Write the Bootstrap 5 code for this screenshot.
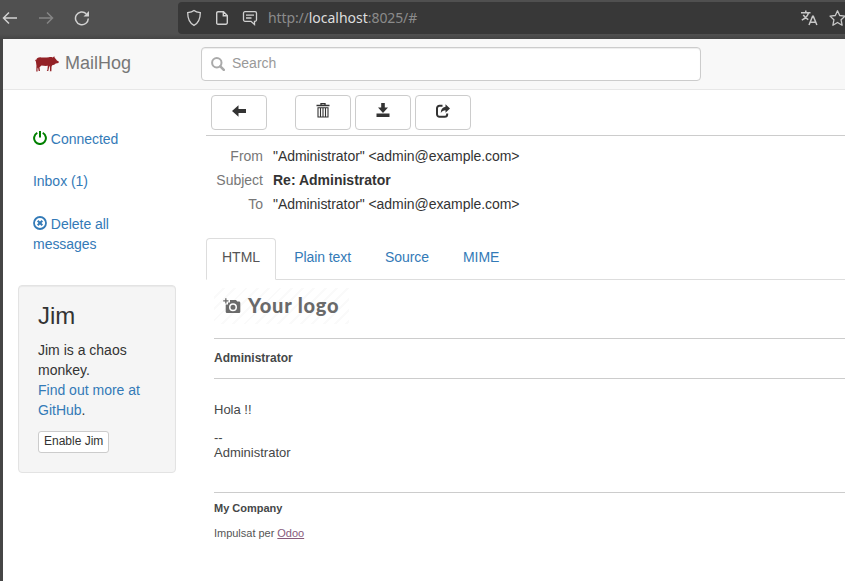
<!DOCTYPE html>
<html lang="en">
<head>
<meta charset="utf-8">
<title>MailHog</title>
<link href="https://cdn.jsdelivr.net/npm/bootstrap@5.3.0/dist/css/bootstrap.min.css" rel="stylesheet">
<style>
body{font-family:"Liberation Sans",Arial,sans-serif;font-size:14px;line-height:20px;color:#333;background:#fff;width:845px;height:581px;overflow:hidden}
a{color:#337ab7;text-decoration:none}
svg{display:block;flex:none}
.browser{height:39px;background:linear-gradient(#505050 0,#505050 34px,#454545 39px);color:#c8c8c8;padding:2px 0 5px 2px}
.browser-nav{width:176px;gap:20px}
.address{background:#383838;border-radius:4px 0 0 4px;height:32px;padding-left:8px}
.icon-gap{margin-left:13px}
.icon-star{margin-left:11px;margin-right:-1px}
.url{font-family:"Noto Sans",sans-serif;font-size:14px;color:#8b8b8b;margin-left:10px;letter-spacing:-.12px}
.url b{font-weight:400;color:#dedede;letter-spacing:0}
.page-frame{height:542px;border-left:3px solid #464646}
.topbar{height:51px;background:#f8f8f8;border-bottom:1px solid #e7e7e7;padding:0 0 1px 32px}
.brand{width:166px;font-size:18px;color:#777;gap:6px}
.brand span,.search span{margin-top:-2px}
.search{width:500px;height:34px;border:1px solid #ccc;border-radius:4px;background:#fff;box-shadow:inset 0 1px 1px rgba(0,0,0,.075);padding-left:9px;gap:7px;color:#999}
.side{width:158px;margin-left:15px;padding-top:29px}
.side .nav{gap:2px}
.side .nav-link{padding:10px 15px;color:#337ab7;letter-spacing:-.03px}
.side .nav-link:last-child{padding-top:11px;padding-bottom:9px}
.side .nav-link svg{display:inline-block;vertical-align:-1px}
.well{margin-top:22px;height:188px;background:#f5f5f5;border:1px solid #e3e3e3;border-radius:4px;padding:17px 19px 19px;box-shadow:inset 0 1px 1px rgba(0,0,0,.05)}
.well h3{font-size:24px;line-height:26px;margin:0 0 11px;font-weight:400}
.well p{margin-bottom:11px}
.btn-plain{--bs-btn-color:#333;--bs-btn-bg:#fff;--bs-btn-border-color:#ccc;border-radius:4px;width:56px;height:35px;padding:0 0 4px}
.btn-jim{width:auto;height:22px;font-size:12px;line-height:18px;padding:0 5px 2px;border-radius:3px;display:block}
.pane{margin-left:30px;min-width:0}
.tools{height:46px;padding:5px 0 0 5px;border-bottom:1px solid #ccc;gap:4px}
.tools .btn:first-child{margin-right:24px}
.heads{padding:8px 0 0;height:102px}
.heads dt{width:57px;text-align:right;font-weight:400;color:#777;margin-right:10px}
.heads>div{height:24px;padding-top:2px}
.heads dd{margin:0;letter-spacing:-.05px}
.heads dd.fw-bold{letter-spacing:0}
.nav-tabs{--bs-nav-tabs-border-color:#ddd;gap:2px;height:42px;flex-wrap:nowrap}
.nav-tabs .nav-link{padding:8px 15px 12px;height:42px;color:#337ab7;border-radius:4px 4px 0 0;letter-spacing:-.07px}
.nav-tabs .nav-link.active{color:#555;border-color:#ddd #ddd #fff;letter-spacing:0}
.mail{padding:8px 0 0 8px;color:#454748;font-size:13px;line-height:15px}
.company-logo{width:135px;height:36px;padding-left:9px;font-family:Lato,sans-serif;font-weight:900;font-size:20px;color:#6a6a6a;gap:7px;letter-spacing:.8px;background:repeating-linear-gradient(135deg,#fff 0,#fff 6px,#fafafa 6px,#fafafa 8px)}
.company-logo span{margin-top:-2px}
.mail-row{border-top:1px solid #ccc}
.mail-title{margin-top:14px;height:40px;font-size:12px;padding-top:12px}
.mail-text{height:114px;padding-top:23px}
.mail-sign{margin-top:13px}
.mail-foot{font-size:11px;padding-top:8px}
.powered{margin-top:10px;color:#555;letter-spacing:-.02px}
.powered a{color:#875a7b;text-decoration:underline}
</style>
<script src="https://cdn.jsdelivr.net/npm/bootstrap@5.3.0/dist/js/bootstrap.bundle.min.js"></script>
</head>
<body>
<header class="browser d-flex">
  <div class="browser-nav d-flex align-items-center">
    <svg width="16" height="16" viewBox="0 0 16 16" fill="none" stroke="#d2d2d2" stroke-width="1.5"><path d="M15 8H1.5M7 2.5 1.5 8 7 13.5"/></svg>
    <svg width="16" height="16" viewBox="0 0 16 16" fill="none" stroke="#858585" stroke-width="1.5"><path d="M1 8h13.500M9 2.500 14.500 8 9 13.500"/></svg>
    <svg width="16" height="16" viewBox="0 0 16 16" fill="none" stroke="#d2d2d2" stroke-width="1.5"><path d="M14.300 8.500A6.400 6.400 0 1 1 12.300 3.700"/><path d="M15 1v5.500H9.500z" fill="#d2d2d2" stroke="none"/></svg>
  </div>
  <div class="address d-flex align-items-center flex-grow-1">
    <svg width="16" height="18" viewBox="0 0 16 18" fill="none" stroke="#d0d0d0" stroke-width="1.300"><path d="M8 1.500c1.600 1.400 3.700 1.900 6.300 2.200 0 5.700-2 10.400-6.300 12.700C3.700 14.100 1.700 9.400 1.700 3.700 4.300 3.400 6.400 2.900 8 1.500z"/></svg>
    <svg class="icon-gap" width="14" height="16" viewBox="0 0 14 16" fill="none" stroke="#d0d0d0" stroke-width="1.400"><path d="M3 1.700h5.500l3.800 3.800v7.300a1.500 1.500 0 0 1-1.500 1.500H3a1.300 1.300 0 0 1-1.300-1.500V3A1.300 1.300 0 0 1 3 1.700zM8.300 1.700v4h4"/></svg>
    <svg class="icon-gap" width="16" height="16" viewBox="0 0 16 16" fill="none" stroke="#d0d0d0" stroke-width="1.300"><path d="M3 1.700h10a1.500 1.500 0 0 1 1.500 1.500v6.600a1.500 1.500 0 0 1-1.500 1.500h-.5v3.200l-3.500-3.200H3A1.500 1.500 0 0 1 1.500 9.800V3.200A1.500 1.500 0 0 1 3 1.700zM4 5.200h8M4 8h5.500"/></svg>
    <span class="url">http://<b>localhost</b>:8025/#</span>
    <svg class="ms-auto" width="17" height="16" viewBox="0 0 17 16" fill="none" stroke="#c8c8c8" stroke-width="1.500"><path d="M0 2.700h9.500M4.800.5v2.200M7.500 2.700C6.700 6 4 8.500.8 10.200M2.300 4.800c1.200 2.300 3 3.800 5 4.900M8 15l3.600-8.700h.7L15.900 15M9.300 12.200h5.400"/></svg>
    <svg class="icon-star" width="17" height="18" viewBox="0 0 17 18" fill="none" stroke="#c8c8c8" stroke-width="1.300" stroke-linejoin="round"><path d="m8.500 1.800 2.200 4.700 5.300.6-3.900 3.700 1 5.400-4.600-2.700-4.600 2.700 1-5.400L1 7.100l5.300-.6z"/></svg>
  </div>
</header>
<div class="page-frame">
  <nav class="topbar d-flex align-items-center">
    <a class="brand d-flex align-items-center" href="#">
      <svg width="24" height="16" viewBox="0 0 24 16" fill="#932126"><path d="M.6 3C0 3.500.3 4.600 1 4.500 1.600 2.100 3.200 1.200 6 1.400c3 .3 5.500.3 8-.2 1.500-.3 2.800 0 3.700.2L19.300.3l.4 1.500c1 .8 1.600 2 2.200 2.700l1.900.9-.3 1.600-2.800.5c-1 1-2.200 1.500-3.500 1.800-.6.900-.7 1.500-.7 2.300l-.1 3.700h-1.700l.4-.8-.3-4.300h-.5l-1 4.900h-1.600l.7-1.200.4-4.100c-2.300.2-4.200 0-6.300-.4l-2 1.900.5 3.700H3.700L3 11.500l-.5 1.300.1 2.700H1.300l.1-5.100c.3-1.800-.6-3.400-.4-5C-.2 5.200-.4 3.700.6 3z"/></svg>
      <span>MailHog</span>
    </a>
    <div class="search d-flex align-items-center">
      <svg width="14" height="14" viewBox="0 0 14 14" fill="none" stroke="#aaa"><circle cx="5.800" cy="5.800" r="4.700" stroke-width="2"/><path d="m9.300 9.300 3.500 3.500" stroke-width="2.600" stroke-linecap="round"/></svg>
      <span>Search</span>
    </div>
  </nav>
  <div class="d-flex">
    <aside class="side flex-shrink-0">
      <nav class="nav flex-column">
        <a class="nav-link" href="#"><svg width="14" height="14" viewBox="0 0 14 14" fill="none" stroke="green" stroke-width="2"><path d="M4.300 1.900a5.900 5.900 0 1 0 5.400 0M7 0v6.500"/></svg> Connected</a>
        <a class="nav-link" href="#">Inbox (1)</a>
        <a class="nav-link" href="#"><svg width="14" height="14" viewBox="0 0 14 14" fill="none" stroke="#337ab7"><circle cx="7" cy="7" r="6" stroke-width="1.800"/><path d="m4.700 4.700 4.600 4.600m0-4.600L4.700 9.300" stroke-width="2"/></svg> Delete all messages</a>
      </nav>
      <section class="well">
        <h3>Jim</h3>
        <p>Jim is a chaos monkey.<br><a href="#">Find out more at GitHub</a>.</p>
        <button class="btn btn-plain btn-jim">Enable Jim</button>
      </section>
    </aside>
    <main class="pane flex-grow-1">
      <div class="tools d-flex">
        <button class="btn btn-plain d-flex align-items-center justify-content-center" aria-label="Back"><svg width="14" height="14" viewBox="0 0 14 14" fill="#333"><path d="M0 7 6.500 1.300V5H14v4H6.500v3.700z"/></svg></button>
        <button class="btn btn-plain d-flex align-items-center justify-content-center" aria-label="Delete"><svg width="14" height="16" viewBox="0 0 14 16" fill="none" stroke="#333"><path d="M5 2V.6h4V2M.5 2.500h13" stroke-width="1.300"/><path d="M2 4.800v9.200h10V4.800zM4.500 5v9M7 5v9M9.500 5v9" stroke-width="1.100"/></svg></button>
        <button class="btn btn-plain d-flex align-items-center justify-content-center" aria-label="Download"><svg width="14" height="15" viewBox="0 0 14 15" fill="#333"><path d="M5.200 0h3.600v4.500H12L7 10 2 4.500h3.200zM.5 10.500h13V14H.5z"/></svg></button>
        <button class="btn btn-plain d-flex align-items-center justify-content-center" aria-label="Release"><svg width="14" height="14" viewBox="0 0 14 14"><path d="M6.500 1.800H3.500A2.500 2.500 0 0 0 1 4.300v5.900a2.500 2.500 0 0 0 2.500 2.500h5.200a2.500 2.500 0 0 0 2.500-2.500V9.500" fill="none" stroke="#333" stroke-width="2"/><path d="M9.500.3 14 4.500 9.500 8.700V6.200C7.500 6.200 6 7 4.800 9c0-3.500 1.500-5.800 4.700-6.200z" fill="#333"/></svg></button>
      </div>
      <dl class="heads mb-0">
        <div class="d-flex"><dt>From</dt><dd>"Administrator" &lt;admin@example.com&gt;</dd></div>
        <div class="d-flex"><dt>Subject</dt><dd class="fw-bold">Re: Administrator</dd></div>
        <div class="d-flex"><dt>To</dt><dd>"Administrator" &lt;admin@example.com&gt;</dd></div>
      </dl>
      <ul class="nav nav-tabs">
        <li class="nav-item"><a class="nav-link active" href="#">HTML</a></li>
        <li class="nav-item"><a class="nav-link" href="#">Plain text</a></li>
        <li class="nav-item"><a class="nav-link" href="#">Source</a></li>
        <li class="nav-item"><a class="nav-link" href="#">MIME</a></li>
      </ul>
      <article class="mail">
        <div class="company-logo d-flex align-items-center">
          <svg width="18" height="17" viewBox="0 0 18 17" fill="#6a6a6a"><path fill-rule="evenodd" d="M7 2h6l1.300 1.600H16a1.300 1.300 0 0 1 1.300 1.300v8.800A1.300 1.300 0 0 1 16 15H4a1.300 1.300 0 0 1-1.300-1.300V6.500H5V4.500h2zm3 3.300a4 4 0 1 0 0 8 4 4 0 0 0 0-8zm0 1.500a2.500 2.500 0 1 1 0 5 2.500 2.500 0 0 1 0-5z"/><path d="M2.200.2h1.300v2h2v1.300h-2v2H2.200v-2h-2V2.200h2z"/></svg>
          <span>Your logo</span>
        </div>
        <div class="mail-row mail-title fw-bold">Administrator</div>
        <div class="mail-row mail-text">Hola !!<div class="mail-sign">--<br>Administrator</div></div>
        <div class="mail-row mail-foot"><b>My Company</b><div class="powered">Impulsat per <a href="#">Odoo</a></div></div>
      </article>
    </main>
  </div>
</div>
</body>
</html>
